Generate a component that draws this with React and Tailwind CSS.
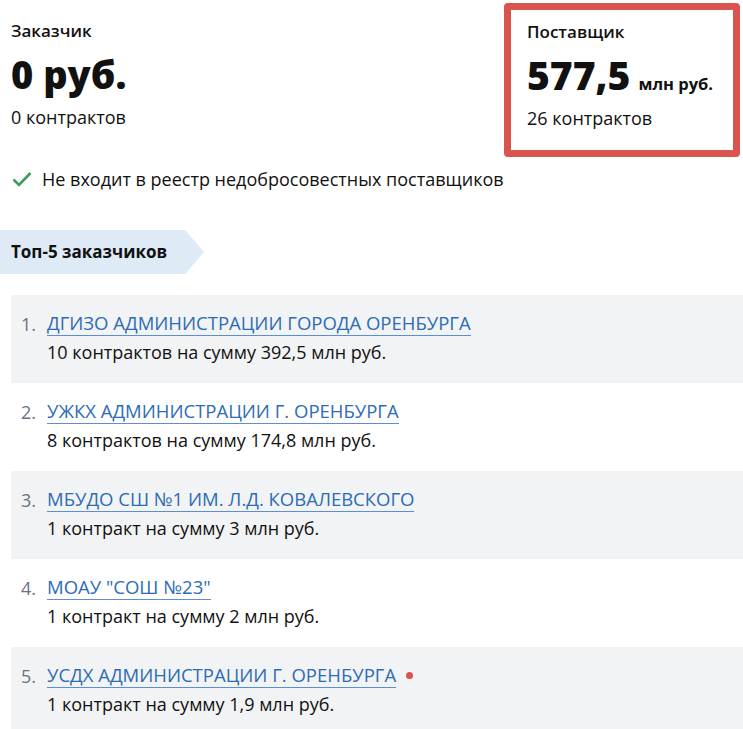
import React from 'react';

const customers = [
  { name: 'ДГИЗО АДМИНИСТРАЦИИ ГОРОДА ОРЕНБУРГА', info: '10 контрактов на сумму 392,5 млн руб.' },
  { name: 'УЖКХ АДМИНИСТРАЦИИ Г. ОРЕНБУРГА', info: '8 контрактов на сумму 174,8 млн руб.' },
  { name: 'МБУДО СШ №1 ИМ. Л.Д. КОВАЛЕВСКОГО', info: '1 контракт на сумму 3 млн руб.' },
  { name: 'МОАУ "СОШ №23"', info: '1 контракт на сумму 2 млн руб.' },
  { name: 'УСДХ АДМИНИСТРАЦИИ Г. ОРЕНБУРГА', info: '1 контракт на сумму 1,9 млн руб.', flag: true },
];

export default function App() {
  return (
    <div className="w-[743px] h-[729px] overflow-hidden bg-white text-[#111] font-['Open_Sans',sans-serif]">
      {/* Summary */}
      <div className="flex pt-[3px] pr-[3px]">
        <div className="flex-1 pl-[11px] pt-[14px]">
          <div className="text-[17px] font-semibold leading-[28px]">Заказчик</div>
          <div className="text-[38px] font-extrabold leading-[50px] mt-[4px]">0 руб.</div>
          <div className="text-[18px] leading-[28px] mt-[4px]">0 контрактов</div>
        </div>
        <div className="w-[236px] h-[154px] border-[7px] border-[#d9534f] rounded-[4px] pl-[16px] pt-[8px]">
          <div className="text-[17px] font-semibold leading-[28px]">Поставщик</div>
          <div className="flex items-baseline gap-[8px] mt-[4px]">
            <span className="text-[39px] font-extrabold leading-[50px]">577,5</span>
            <span className="text-[16.5px] font-bold">млн руб.</span>
          </div>
          <div className="text-[18px] leading-[28px] mt-[4px]">26 контрактов</div>
        </div>
      </div>

      {/* Registry status */}
      <div className="flex items-center gap-[10px] pl-[12px] mt-[8px] h-[28px]">
        <svg width="20" height="16" viewBox="0 0 20 16" fill="none">
          <path d="M1.5 8.5 L7 14 L18.5 2" stroke="#3a9d5d" strokeWidth="2.6" />
        </svg>
        <span className="text-[18px] leading-[28px]">Не входит в реестр недобросовестных поставщиков</span>
      </div>

      {/* Top-5 header */}
      <div className="flex mt-[37px] h-[44px]">
        <div className="bg-[#deebf7] flex items-center pl-[11px] w-[185px] text-[17px] font-bold">
          Топ-5 заказчиков
        </div>
        <div className="w-0 h-0 border-y-[22px] border-y-transparent border-l-[19px] border-l-[#deebf7]" />
      </div>

      {/* List */}
      <div className="ml-[11px] mt-[21px]">
        {customers.map((c, i) => (
          <div key={i} className={`flex h-[88px] pt-[16px] ${i % 2 === 0 ? 'bg-[#f2f3f4]' : 'bg-white'}`}>
            <div className="w-[36px] pl-[10px] text-[18px] leading-[26px] text-[#6b7280]">{i + 1}.</div>
            <div>
              <div className="flex items-center gap-[10px]">
                <a href="#" className="text-[18.5px] leading-[24px] text-[#2d6cb5] border-b border-[#5b8fd0]">
                  {c.name}
                </a>
                {c.flag && <span className="w-[7px] h-[7px] rounded-full bg-[#d9534f]" />}
              </div>
              <div className="text-[18px] leading-[28px] mt-[2px]">{c.info}</div>
            </div>
          </div>
        ))}
      </div>
    </div>
  );
}
